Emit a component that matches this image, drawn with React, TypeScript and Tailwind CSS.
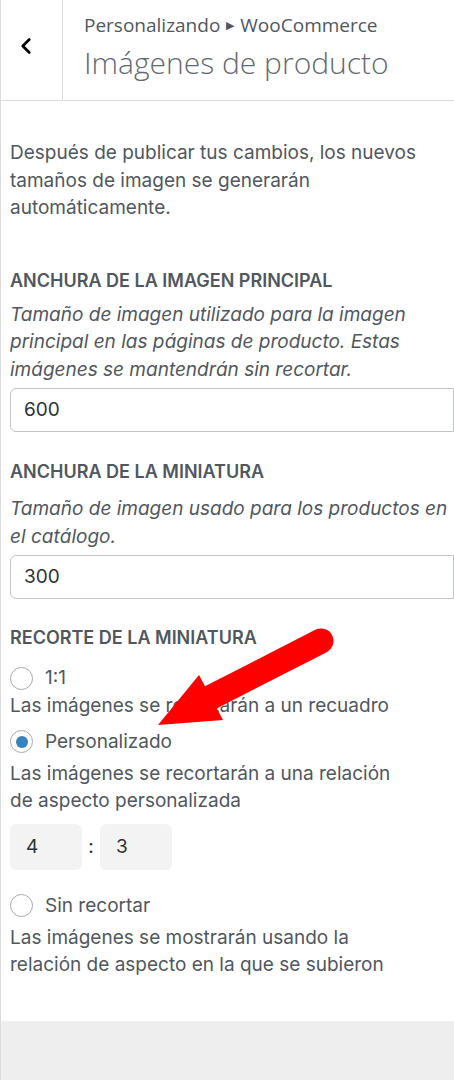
import { ChevronLeft } from "lucide-react";

function Radio({ checked, label }: { checked?: boolean; label: string }) {
  return (
    <label className="flex items-center gap-[12px] h-[26px]">
      <span className="w-[23px] h-[23px] rounded-full border border-[#a7aaad] bg-white flex items-center justify-center">
        {checked && <span className="w-[12px] h-[12px] rounded-full bg-[#3582c4]" />}
      </span>
      <span className="text-[19px] text-[#50575e]">{label}</span>
    </label>
  );
}

export default function App() {
  return (
    <div
      className="relative min-h-[1080px] bg-[#eeeeee] border-l border-[#dcdcde]"
      style={{ fontFamily: "Inter, 'Liberation Sans', sans-serif" }}
    >
      <div className="bg-white pb-[42px]">
        {/* Cabecera */}
        <div className="flex h-[101px] border-b border-[#dcdcde]">
          <div className="w-[62px] shrink-0 border-r border-[#dcdcde] flex items-start pl-[12px] pt-[33px]">
            <ChevronLeft className="w-[26px] h-[26px] text-black" strokeWidth={2.5} />
          </div>
          <div className="pl-[21px] pt-[11px]" style={{ fontFamily: "'Open Sans', sans-serif" }}>
            <div className="text-[19px] text-[#50575e] leading-[28px] flex items-center gap-[6px]">
              Personalizando
              <span className="text-[11px]">▶</span>
              WooCommerce
            </div>
            <div className="text-[30px] font-light text-[#646970] leading-[40px] mt-[4px]">
              Imágenes de producto
            </div>
          </div>
        </div>

        {/* Contenido */}
        <div className="pl-[9px] text-[#50575e] text-[19px] leading-[27.5px]">
          <p className="mt-[38px]">
            Después de publicar tus cambios, los nuevos
            <br />
            tamaños de imagen se generarán
            <br />
            automáticamente.
          </p>

          <h3 className="mt-[49px] text-[18px] font-semibold uppercase leading-[20px]">
            Anchura de la imagen principal
          </h3>
          <p className="mt-[10px] italic">
            Tamaño de imagen utilizado para la imagen
            <br />
            principal en las páginas de producto. Estas
            <br />
            imágenes se mantendrán sin recortar.
          </p>
          <div className="mt-[5px] h-[44px] border border-[#c3c4c7] rounded-l-[6px] flex items-center pl-[13px] text-[#2c3338] text-[19px]">
            600
          </div>

          <h3 className="mt-[30px] text-[18px] font-semibold uppercase leading-[20px]">
            Anchura de la miniatura
          </h3>
          <p className="mt-[13px] italic">
            Tamaño de imagen usado para los productos en
            <br />
            el catálogo.
          </p>
          <div className="mt-[5px] h-[44px] border border-[#c3c4c7] rounded-l-[6px] flex items-center pl-[13px] text-[#2c3338] text-[19px]">
            300
          </div>

          <h3 className="mt-[29px] text-[18px] font-semibold uppercase leading-[20px]">
            Recorte de la miniatura
          </h3>
          <div className="mt-[17px]">
            <Radio label="1:1" />
          </div>
          <p className="mt-[1px]">Las imágenes se recortarán a un recuadro</p>
          <div className="mt-[9px]">
            <Radio checked label="Personalizado" />
          </div>
          <p className="mt-[5px]">
            Las imágenes se recortarán a una relación
            <br />
            de aspecto personalizada
          </p>
          <div className="mt-[9px] flex items-center text-[19px] text-[#2c3338]">
            <div className="w-[72px] h-[46px] rounded-[6px] bg-[#f3f3f3] flex items-center pl-[16px]">4</div>
            <span className="w-[18px] text-center">:</span>
            <div className="w-[72px] h-[46px] rounded-[6px] bg-[#f3f3f3] flex items-center pl-[16px]">3</div>
          </div>
          <div className="mt-[23px]">
            <Radio label="Sin recortar" />
          </div>
          <p className="mt-[5px]">
            Las imágenes se mostrarán usando la
            <br />
            relación de aspecto en la que se subieron
          </p>
        </div>
      </div>

      {/* Flecha roja */}
      <svg
        className="absolute left-0 top-0 pointer-events-none"
        width="454"
        height="1080"
        viewBox="0 0 454 1080"
      >
        <line x1="195" y1="705" x2="320" y2="641" stroke="#ff0000" strokeWidth="25" strokeLinecap="round" />
        <polygon points="198,675 222,720 157,725" fill="#ff0000" />
      </svg>
    </div>
  );
}
